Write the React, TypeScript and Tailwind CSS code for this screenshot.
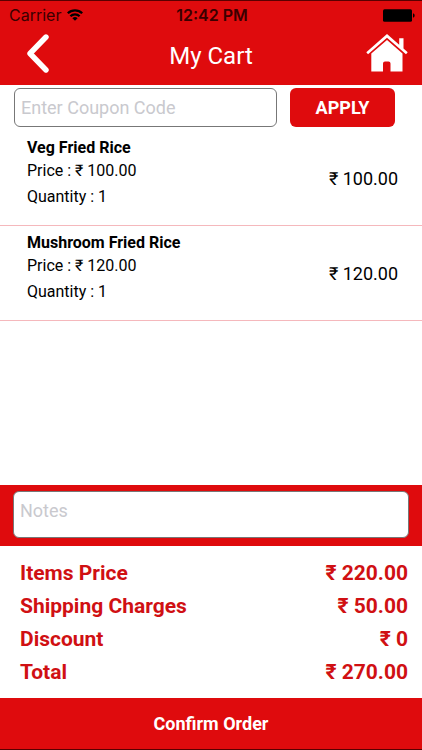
import { useState } from "react";

type TItem = { name: string, price: string, quantity: number }

const items: TItem[] = [
    { name: 'Veg Fried Rice', price: '100.00', quantity: 1 },
    { name: 'Mushroom Fried Rice', price: '120.00', quantity: 1 },
]

const totals = [
    { label: 'Items Price', value: '220.00' },
    { label: 'Shipping Charges', value: '50.00' },
    { label: 'Discount', value: '0' },
    { label: 'Total', value: '270.00' },
]

const Icons = {
    wifi: <svg viewBox="0 0 16 12" className="w-4 h-3" fill="none" stroke="currentColor" strokeWidth="2.3">
        <path d="M0.8 4.3a10.2 10.2 0 0 1 14.4 0" />
        <path d="M3.4 7.2a6.5 6.5 0 0 1 9.2 0" />
        <path d="M8 11.8 5.4 9.3a3.6 3.6 0 0 1 5.2 0Z" fill="currentColor" stroke="none" />
    </svg>,
    battery: <svg viewBox="0 0 32 13" className="w-8 h-[13px]" fill="currentColor">
        <rect x="0" y="0.3" width="29" height="12.4" rx="1.5" />
        <path d="M30 4.3c2.2 0.8 2.2 3.6 0 4.4Z" />
    </svg>,
    back: <svg viewBox="0 0 22 39" className="w-[22px] h-[39px]" fill="none" stroke="currentColor" strokeWidth="5.4" strokeLinecap="round" strokeLinejoin="round">
        <path d="M19 3 3 19.5 19 36" />
    </svg>,
    home: <svg viewBox="0 0 42 38" className="w-[42px] h-[38px]" fill="currentColor">
        <path d="M21 0 0.3 18.2 2 20.2 21 3.8 40 20.2 41.7 18.2 37.5 14.5V4.2H33.2V10.7Z" />
        <path d="M21 6 5.3 19.4V37.4H17V29.4a2 2 0 0 1 2-2H22.5a2 2 0 0 1 2 2V37.4H36.5V19.4Z" />
    </svg>,
}

function StatusBar() {
    return <div className="grid grid-cols-3 items-center h-7 pl-[9px] pr-[7px] text-base text-[#3a0000] font-[Inter,sans-serif]">
        <div className="flex items-center gap-[6px]">
            Carrier
            <span className="text-black">{Icons.wifi}</span>
        </div>
        <div className="text-center font-semibold whitespace-nowrap">12:42 PM</div>
        <div className="flex justify-end text-black">{Icons.battery}</div>
    </div>
}

function CartItem({ item }: { item: TItem }) {
    return <li className="flex items-center justify-between h-[95px] pt-[2px] pl-[27px] pr-6 border-b border-[#f5b8bc]">
        <div className="flex flex-col h-full pt-1 text-base">
            <h2 className="font-bold leading-[22px]">{item.name}</h2>
            <p className="leading-6">Price : ₹ {item.price}</p>
            <p className="leading-7">Quantity : {item.quantity}</p>
        </div>
        <p className="text-lg">₹ {item.price}</p>
    </li>
}

export default function App() {
    const [coupon, setCoupon] = useState('')
    const [notes, setNotes] = useState('')

    return <div className="flex flex-col min-h-screen bg-white text-black font-[Roboto,sans-serif]">
        <header className="h-[85px] bg-[#df0b0d] border-t border-[#5a0000] text-white">
            <StatusBar />
            <div className="grid grid-cols-[1fr_auto_1fr] items-center h-12 pl-[14px] pr-[14px]">
                <button type="button" aria-label="Back" className="justify-self-start pl-[13px]">{Icons.back}</button>
                <h1 className="pt-[6px] text-2xl">My Cart</h1>
                <button type="button" aria-label="Home" className="justify-self-end">{Icons.home}</button>
            </div>
        </header>

        <main className="flex flex-col flex-1">
            <form className="flex gap-[13px] pt-[3px] pl-[14px] pr-[27px]" onSubmit={(e) => e.preventDefault()}>
                <input
                    type="text"
                    aria-label="Coupon code"
                    placeholder="Enter Coupon Code"
                    className="flex-1 min-w-0 h-[39px] px-[6px] text-lg rounded-md border border-[#777] placeholder:text-[#c9c9ce] outline-none"
                    value={coupon}
                    onChange={(e) => setCoupon(e.target.value)} />
                <button type="submit" className="w-[105px] h-[39px] rounded-md bg-[#df0b0d] text-lg font-bold text-white">APPLY</button>
            </form>
            <ul className="pt-1">
                {items.map((item) => <CartItem key={item.name} item={item} />)}
            </ul>
        </main>

        <footer>
            <div className="flex px-[13px] pt-[6px] pb-2 bg-[#df0b0d]">
                <textarea
                    aria-label="Notes"
                    placeholder="Notes"
                    className="w-full h-[47px] px-[6px] py-[5px] text-lg rounded-md border border-[#777] bg-white placeholder:text-[#c9c9ce] resize-none outline-none"
                    value={notes}
                    onChange={(e) => setNotes(e.target.value)} />
            </div>
            <dl className="pr-[14px] pl-5 pt-[11px] pb-[9px] text-[21px] leading-[33px] font-bold text-[#d01013]">
                {totals.map((t) => <div key={t.label} className="flex justify-between">
                    <dt>{t.label}</dt>
                    <dd>₹ {t.value}</dd>
                </div>)}
            </dl>
            <button type="button" className="block w-full h-[52px] bg-[#df0b0d] border-b border-[#5a0000] text-lg font-bold text-white">Confirm Order</button>
        </footer>
    </div>
}
